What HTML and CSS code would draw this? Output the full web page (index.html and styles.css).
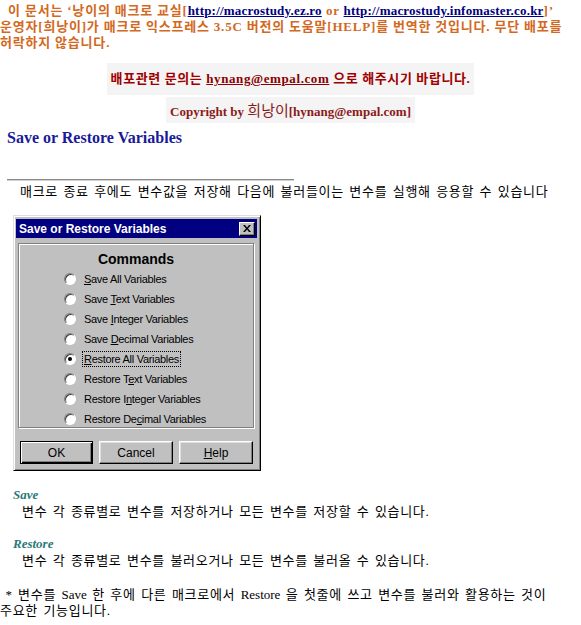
FILE: index.html
```html
<!DOCTYPE html>
<html lang="ko">
<head>
<meta charset="utf-8">
<title>Save or Restore Variables</title>
<link rel="stylesheet" href="styles.css">
</head>
<body>
<p class="intro">&nbsp;&nbsp;이 문서는 ‘낭이의 매크로 교실[<a class="url" href="#">http://macrostudy.ez.ro</a> <span class="latin">or</span> <a class="url" href="#">http://macrostudy.infomaster.co.kr</a>]’<br>운영자[희낭이]가 매크로 익스프레스 <span class="latin">3.5C</span> 버전의 도움말[HELP]를 번역한 것입니다. 무단 배포를<br>허락하지 않습니다.</p>
<p class="contact"><span class="box">배포관련 문의는 <a class="mail" href="#">hynang@empal.com</a> 으로 해주시기 바랍니다.</span></p>
<p class="copy"><span class="box"><span class="latin">Copyright by </span><span class="name">희낭이</span><span class="latin">[hynang@empal.com]</span></span></p>
<h1 class="title">Save or Restore Variables</h1>
<hr class="rule">
<p class="lead">매크로 종료 후에도 변수값을 저장해 다음에 불러들이는 변수를 실행해 응용할 수 있습니다</p>

<div class="dialog">
  <div class="titlebar">
    <span class="caption">Save or Restore Variables</span>
    <span class="close"><svg width="8" height="7" viewBox="0 0 8 7"><path d="M0 0h2l2 2.5L6 0h2L5 3.5 8 7H6L4 4.5 2 7H0l3-3.5z" fill="#000"/></svg></span>
  </div>
  <div class="group">
    <div class="legend">Commands</div>
    <ul class="radios">
      <li><span class="radio"></span><span class="label"><u>S</u>ave All Variables</span></li>
      <li><span class="radio"></span><span class="label">Save <u>T</u>ext Variables</span></li>
      <li><span class="radio"></span><span class="label">Save <u>I</u>nteger Variables</span></li>
      <li><span class="radio"></span><span class="label">Save <u>D</u>ecimal Variables</span></li>
      <li><span class="radio checked"></span><span class="label focus"><u>R</u>estore All Variables</span></li>
      <li><span class="radio"></span><span class="label">Restore T<u>e</u>xt Variables</span></li>
      <li><span class="radio"></span><span class="label">Restore I<u>n</u>teger Variables</span></li>
      <li><span class="radio"></span><span class="label">Restore De<u>c</u>imal Variables</span></li>
    </ul>
  </div>
  <div class="buttons">
    <span class="btn default">OK</span>
    <span class="btn">Cancel</span>
    <span class="btn"><u>H</u>elp</span>
  </div>
</div>

<dl class="terms">
  <dt>Save</dt>
  <dd>변수 각 종류별로 변수를 저장하거나 모든 변수를 저장할 수 있습니다.</dd>
  <dt>Restore</dt>
  <dd>변수 각 종류별로 변수를 불러오거나 모든 변수를 불러올 수 있습니다.</dd>
</dl>
<p class="note">&nbsp;* 변수를 <span class="latin">Save</span> 한 후에 다른 매크로에서 <span class="latin">Restore</span> 을 첫줄에 쓰고 변수를 불러와 활용하는 것이<br>주요한 기능입니다.</p>
</body>
</html>
```

FILE: styles.css
```css
html, body {
  margin: 0;
  padding: 0;
  background: #fff;
}
body {
  font-family: "Liberation Serif", "Noto Sans CJK KR", serif;
  font-size: 13px;
  color: #000;
}
.intro {
  margin: 0;
  padding-top: 3px;
  line-height: 16px;
  font-weight: bold;
  color: #d2691e;
  white-space: nowrap;
  letter-spacing: 0.8px;
}
.url {
  color: #000080;
  text-decoration: underline;
  letter-spacing: 0.2px;
}
.contact, .copy {
  margin: 12px 0 0;
  text-align: center;
  font-weight: bold;
  line-height: 16px;
  color: #a00000;
}
.contact .box {
  display: inline-block;
  padding: 8px 4px;
  background: #f4f4f4;
  letter-spacing: 0.6px;
}
.mail {
  color: #8b0000;
  text-decoration: underline;
}
.copy {
  margin-top: 2px;
  color: #8b1a1a;
}
.copy .box {
  display: inline-block;
  padding: 6px 4px 3px;
  background: #f4f4f4;
}
.copy .name {
  font-weight: normal;
  font-size: 15px;
}
.title {
  margin: 5px 0 0 7px;
  font-size: 16px;
  line-height: 20px;
  font-weight: bold;
  color: #1a1a99;
}
.rule {
  margin: 31px 0 0 7px;
  width: 287px;
  height: 0;
  border: 0;
  border-top: 1px solid #8a8a8a;
  border-bottom: 1px solid #d0d0d0;
}
.lead {
  margin: 3px 0 0;
  padding-left: 20px;
  line-height: 16px;
  letter-spacing: 0.7px;
  word-spacing: 1.5px;
  white-space: nowrap;
}

/* dialog */
.dialog {
  margin: 15px 0 0 13px;
  width: 248px;
  height: 256px;
  box-sizing: border-box;
  background: #c0c0c0;
  border: 1px solid;
  border-color: #dfdfdf #000 #000 #dfdfdf;
  box-shadow: inset 1px 1px #fff, inset -1px -1px #808080;
  padding: 3px 3px 0 2px;
  font-family: "Liberation Sans", Arial, sans-serif;
}
.titlebar {
  height: 19px;
  background: #000080;
  display: flex;
  align-items: center;
  justify-content: space-between;
  padding: 0 2px 0 3px;
}
.caption {
  color: #fff;
  font-weight: bold;
  font-size: 12px;
}
.close {
  width: 16px;
  height: 14px;
  box-sizing: border-box;
  background: #c0c0c0;
  border: 1px solid;
  border-color: #fff #000 #000 #fff;
  box-shadow: inset -1px -1px #808080;
  display: flex;
  align-items: center;
  justify-content: center;
}
.group {
  margin: 5px 3px 0 2px;
  height: 185px;
  box-sizing: border-box;
  border: 1px solid #808080;
  box-shadow: inset 1px 1px #fff, 1px 1px #fff;
}
.legend {
  margin-top: 5px;
  text-align: center;
  font-weight: bold;
  font-size: 14px;
  line-height: 20px;
}
.radios {
  list-style: none;
  margin: 0;
  padding: 0 0 0 45px;
}
.radios li {
  height: 20px;
  display: flex;
  align-items: center;
  font-size: 11px;
  letter-spacing: -0.3px;
}
.radio {
  width: 12px;
  height: 12px;
  box-sizing: border-box;
  border-radius: 50%;
  background: #fff;
  border: 1px solid;
  border-color: #808080 #fff #fff #808080;
  box-shadow: inset 1px 1px #404040;
  margin-right: 6px;
  position: relative;
}
.radio.checked::after {
  content: "";
  position: absolute;
  left: 3px;
  top: 3px;
  width: 4px;
  height: 4px;
  border-radius: 50%;
  background: #000;
}
.label {
  padding: 1px 1px;
  border: 1px solid transparent;
}
.label.focus {
  border: 1px dotted #000;
}
.buttons {
  display: flex;
  gap: 6px;
  margin: 13px 0 0 4px;
}
.btn {
  width: 74px;
  height: 23px;
  box-sizing: border-box;
  display: flex;
  align-items: center;
  justify-content: center;
  font-size: 12px;
  border: 1px solid;
  border-color: #fff #000 #000 #fff;
  box-shadow: inset -1px -1px #808080, inset 1px 1px #dfdfdf;
}
.btn.default {
  width: 73px;
  border: 1px solid #000;
  box-shadow: inset 1px 1px #fff, inset -1px -1px #000, inset -2px -2px #808080;
}

/* terms */
.terms {
  margin: 16px 0 0;
}
.terms dt {
  margin-left: 13px;
  line-height: 16px;
  font-weight: bold;
  font-style: italic;
  color: #2a7a7a;
}
.terms dd {
  margin: 1px 0 0;
  padding-left: 22px;
  line-height: 16px;
  letter-spacing: 0.7px;
  word-spacing: 1.5px;
}
.terms dd + dt {
  margin-top: 16px;
}
.note {
  margin: 18px 0 0;
  line-height: 16px;
  letter-spacing: 0.7px;
  word-spacing: 1.5px;
  white-space: nowrap;
}
.note .latin {
  letter-spacing: 0;
}
```
